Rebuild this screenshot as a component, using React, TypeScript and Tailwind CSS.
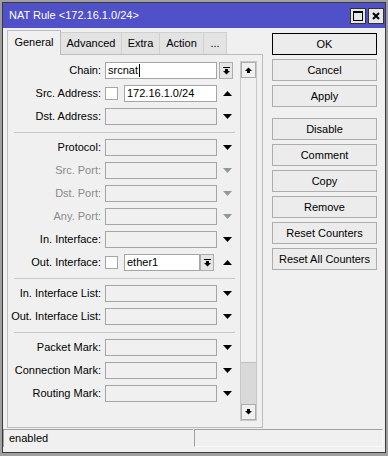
import type { ReactNode } from 'react'

const TriDown = ({ dim }: { dim?: boolean }) => (
  <svg width="9" height="5" viewBox="0 0 9 5" className="block">
    <path d="M0 0H9L4.5 5Z" fill={dim ? '#8e9c8e' : '#000'} />
  </svg>
)

const TriUp = () => (
  <svg width="9" height="5" viewBox="0 0 9 5" className="block">
    <path d="M0 5H9L4.5 0Z" fill="#000" />
  </svg>
)

// little "drop" button with bar + down arrow
const DropBtn = () => (
  <div className="w-[14px] h-[17px] border border-[#adadad] bg-[#e5e5e5] flex items-center justify-center">
    <svg width="7" height="8" viewBox="0 0 7 8" className="block">
      <rect x="0" y="0" width="7" height="1" fill="#000" />
      <rect x="2" y="2" width="3" height="2" fill="#000" />
      <path d="M0 4H7L3.5 7.5Z" fill="#000" />
    </svg>
  </div>
)

const Field = ({ children, w = 'w-[112px]', disabled }: { children?: ReactNode; w?: string; disabled?: boolean }) => (
  <div
    className={`${w} h-[17px] border border-[#a5a5a5] flex items-center pl-[2px] ${disabled ? 'bg-[#f0f0f0]' : 'bg-white'}`}
  >
    {children}
  </div>
)

const Check = () => <div className="w-[13px] h-[13px] border border-[#a5a5a5] bg-white" />

function Row({ label, gray, children }: { label: string; gray?: boolean; children: ReactNode }) {
  return (
    <div className="h-[23px] flex items-center">
      <div className={`w-[93px] text-right whitespace-nowrap ${gray ? 'text-[#8a8a8a]' : 'text-black'}`}>{label}</div>
      <div className="ml-[4px] flex items-center">{children}</div>
    </div>
  )
}

const Sep = ({ mt = 'mt-[4px]' }: { mt?: string }) => (
  <div className={`${mt} mb-[3px] ml-[6px] w-[221px] h-px bg-[#c8c8c8]`} />
)

const EmptyRow = ({ label, gray }: { label: string; gray?: boolean }) => (
  <Row label={label} gray={gray}>
    <Field disabled />
    <div className="ml-[6px]">
      <TriDown dim={gray} />
    </div>
  </Row>
)

const ScrollArrow = ({ up }: { up?: boolean }) => (
  <div className="h-[16px] border border-[#adadad] bg-[#f0f0f0] flex items-center justify-center">
    <svg width="7" height="6" viewBox="0 0 7 6" className={`block ${up ? '' : 'rotate-180'}`}>
      <path d="M0 4L3.5 0.5L7 4Z" fill="#000" />
      <rect x="2" y="4" width="3" height="2" fill="#000" />
    </svg>
  </div>
)

const SideBtn = ({ label, def, className = '' }: { label: string; def?: boolean; className?: string }) => (
  <div
    className={`h-[22px] flex items-center justify-center bg-[#ececec] border ${def ? 'border-black' : 'border-[#adadad]'} ${className}`}
  >
    {label}
  </div>
)

export default function App() {
  const tabs = [
    { t: 'Advanced', w: 'w-[61px]' },
    { t: 'Extra', w: 'w-[38px]' },
    { t: 'Action', w: 'w-[44px]' },
    { t: '...', w: 'w-[23px]' },
  ]
  return (
    <div
      className="w-[388px] h-[456px] bg-[#a0a0a0] pt-[2px] px-[2px] pb-[3px] text-[11px] leading-none text-black"
      style={{ fontFamily: '"Liberation Sans", Arial, sans-serif' }}
    >
      <div className="h-full border border-[#3a3a3a] bg-[#f0f0f0] flex flex-col">
        {/* title bar */}
        <div className="h-[25px] bg-[#5050c8] flex items-center justify-between pl-[6px] pr-[1px]">
          <span className="text-white text-[11px]">NAT Rule &lt;172.16.1.0/24&gt;</span>
          <div className="flex gap-[2px] mt-px">
            <div className="w-[16px] h-[16px] bg-[#e6e6e6] border border-[#333] flex items-center justify-center">
              <div className="w-[10px] h-[10px] border border-black border-t-2" />
            </div>
            <div className="w-[16px] h-[16px] bg-[#e6e6e6] border border-[#333] flex items-center justify-center">
              <svg width="8" height="8" viewBox="0 0 8 8" className="block">
                <path d="M1 1L7 7M7 1L1 7" stroke="#000" strokeWidth="2" />
              </svg>
            </div>
          </div>
        </div>

        {/* body */}
        <div className="h-[400px] flex">
          <div className="pl-[4px] pt-[1px]">
            {/* tabs */}
            <div className="h-[25px] flex items-end">
              <div className="w-[54px] h-[25px] bg-[#f0f0f0] border border-b-0 border-[#bdbdbd] flex items-center justify-center relative z-10 -mb-px pb-px">
                General
              </div>
              {tabs.map((t) => (
                <div
                  key={t.t}
                  className={`${t.w} h-[22px] bg-[#e3e3e3] border border-b-0 border-l-0 border-[#d0d0d0] flex items-center justify-center`}
                >
                  {t.t}
                </div>
              ))}
            </div>

            {/* panel */}
            <div className="w-[256px] h-[374px] border border-[#bdbdbd] flex">
              <div className="w-[232px] pt-[4px]">
                <Row label="Chain:">
                  <Field>
                    <span>srcnat</span>
                    <span className="w-px h-[13px] bg-black ml-px" />
                  </Field>
                  <div className="ml-[2px]">
                    <DropBtn />
                  </div>
                </Row>
                <Row label="Src. Address:">
                  <Check />
                  <div className="ml-[6px]">
                    <Field w="w-[93px]">172.16.1.0/24</Field>
                  </div>
                  <div className="ml-[6px]">
                    <TriUp />
                  </div>
                </Row>
                <EmptyRow label="Dst. Address:" />
                <Sep />
                <EmptyRow label="Protocol:" />
                <EmptyRow label="Src. Port:" gray />
                <EmptyRow label="Dst. Port:" gray />
                <EmptyRow label="Any. Port:" gray />
                <EmptyRow label="In. Interface:" />
                <Row label="Out. Interface:">
                  <Check />
                  <div className="ml-[6px]">
                    <Field w="w-[76px]">ether1</Field>
                  </div>
                  <DropBtn />
                  <div className="ml-[9px]">
                    <TriUp />
                  </div>
                </Row>
                <Sep />
                <EmptyRow label="In. Interface List:" />
                <EmptyRow label="Out. Interface List:" />
                <Sep />
                <EmptyRow label="Packet Mark:" />
                <EmptyRow label="Connection Mark:" />
                <EmptyRow label="Routing Mark:" />
              </div>

              {/* scrollbar */}
              <div className="w-[17px] mt-[6px] h-[360px] border border-[#c8c8c8] flex flex-col">
                <ScrollArrow up />
                <div className="flex-1 flex flex-col justify-end">
                  <div className="h-[42px] bg-[#d9d9d9] border-t border-[#c0c0c0]" />
                </div>
                <ScrollArrow />
              </div>
            </div>
          </div>

          {/* buttons */}
          <div className="ml-[9px] pt-[5px] w-[105px] flex flex-col">
            <SideBtn label="OK" def />
            <SideBtn label="Cancel" className="mt-[4px]" />
            <SideBtn label="Apply" className="mt-[4px]" />
            <SideBtn label="Disable" className="mt-[11px]" />
            <SideBtn label="Comment" className="mt-[4px]" />
            <SideBtn label="Copy" className="mt-[4px]" />
            <SideBtn label="Remove" className="mt-[4px]" />
            <SideBtn label="Reset Counters" className="mt-[4px]" />
            <SideBtn label="Reset All Counters" className="mt-[4px]" />
          </div>
        </div>

        {/* status bar */}
        <div className="mt-px h-[18px] flex pr-[2px]">
          <div className="w-[190px] border-t border-l border-[#a0a0a0] flex items-center pl-[5px]">enabled</div>
          <div className="ml-[1px] flex-1 border border-[#a0a0a0] border-b-[#f8f8f8] border-r-[#f8f8f8]" />
        </div>
      </div>
    </div>
  )
}
